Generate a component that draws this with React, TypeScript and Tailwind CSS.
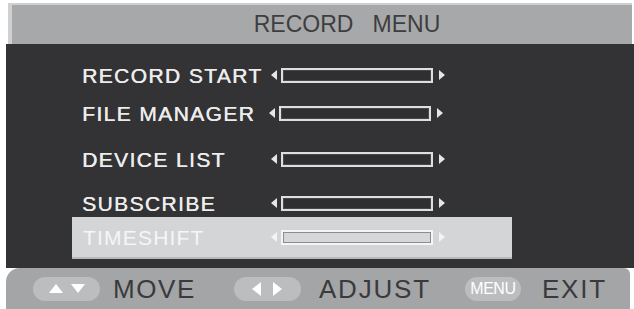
import React from "react";

const font = { fontFamily: '"Liberation Sans", Arial, sans-serif' };

function Slider({ light = false }: { light?: boolean }) {
  const c = light ? "#f4f4f4" : "#e6e6e6";
  return (
    <div className="flex items-center">
      <svg width="8" height="12" viewBox="0 0 8 12" className="mr-[3px]">
        <polygon points="7,1 1,6 7,11" fill={c} />
      </svg>
      <div
        className={`w-[152px] h-[15px] border-[2px] ${light ? "border-[#f5f5f5] bg-[#d6d7d9]" : "border-[#dedede] bg-[#2f2f31]"} shadow-[inset_0_0_0_1px_rgba(90,90,90,0.6)]`}
      />
      <svg width="8" height="12" viewBox="0 0 8 12" className="ml-[5px]">
        <polygon points="1,1 7,6 1,11" fill={c} />
      </svg>
    </div>
  );
}

function Row({ label, mt, textW = 188 }: { label: string; mt: string; textW?: number }) {
  return (
    <div className={`flex items-center h-[24px] pl-[76px] ${mt}`}>
      <div
        className="text-[21px] leading-none text-[#ececec] tracking-[1.4px] whitespace-nowrap [text-shadow:0.4px_0_0_#ececec]"
        style={{ width: textW }}
      >
        {label}
      </div>
      <Slider />
    </div>
  );
}

export default function App() {
  return (
    <div className="w-[634px] h-[309px] bg-white overflow-hidden" style={font}>
      <div className="ml-[8px] mt-[3px] w-[624px] h-[41px] bg-[#a7a8aa] border-t-[2px] border-l-[4px] border-[#cfd0d2] flex items-center justify-center">
        <span className="text-[23px] text-[#3e3e40] whitespace-pre ml-[50px]">RECORD   MENU</span>
      </div>
      <div className="ml-[6px] w-[628px] h-[224px] bg-[#333335] flex flex-col">
        <Row label="RECORD START" mt="mt-[19px]" textW={188} />
        <Row label="FILE MANAGER" mt="mt-[14px]" textW={186} />
        <Row label="DEVICE LIST" mt="mt-[22px]" textW={188} />
        <Row label="SUBSCRIBE" mt="mt-[20px]" textW={188} />
        <div className="ml-[66px] mt-[2px] w-[440px] h-[42px] bg-[#d4d5d7] flex items-center pl-[11px] border-b-[2px] border-[#b8b9bb]">
          <div className="w-[187px] text-[21px] leading-none text-[#f6f6f6] tracking-[1.2px]">TIMESHIFT</div>
          <Slider light />
        </div>
      </div>
      <div className="ml-[6px] w-[624px] h-[41px] bg-[#a4a5a7] rounded-tl-[14px] rounded-tr-[6px] flex items-center text-[#3a3a3c] text-[26px] leading-none">
        <div className="ml-[27px] w-[67px] h-[24px] rounded-full bg-[#bcbdbf] flex items-center justify-center gap-[6px]">
          <svg width="16" height="11" viewBox="0 0 16 11"><polygon points="8,1 15,10 1,10" fill="#fff" /></svg>
          <svg width="16" height="11" viewBox="0 0 16 11"><polygon points="1,1 15,1 8,10" fill="#fff" /></svg>
        </div>
        <span className="ml-[13px] tracking-[1.6px]">MOVE</span>
        <div className="ml-[38px] w-[67px] h-[24px] rounded-full bg-[#bcbdbf] flex items-center justify-center gap-[10px]">
          <svg width="11" height="16" viewBox="0 0 11 16"><polygon points="10,1 10,15 1,8" fill="#fff" /></svg>
          <svg width="11" height="16" viewBox="0 0 11 16"><polygon points="1,1 1,15 10,8" fill="#fff" /></svg>
        </div>
        <span className="ml-[18px] tracking-[1.8px]">ADJUST</span>
        <div className="ml-[34px] w-[56px] h-[24px] rounded-full bg-[#bcbdbf] flex items-center justify-center">
          <span className="text-[16px] text-white tracking-[-0.5px]">MENU</span>
        </div>
        <span className="ml-[21px] tracking-[1.8px]">EXIT</span>
      </div>
    </div>
  );
}
